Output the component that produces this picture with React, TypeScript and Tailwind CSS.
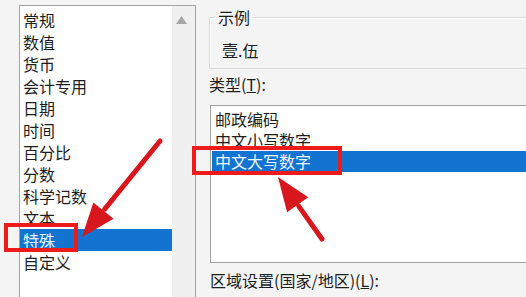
const formats = ["常规", "数值", "货币", "会计专用", "日期", "时间", "百分比", "分数", "科学记数", "文本", "特殊", "自定义"]
const types = ["邮政编码", "中文小写数字", "中文大写数字"]

function Arrow({ tail, tip }: { tail: [number, number]; tip: [number, number] }) {
  const dx = tail[0] - tip[0]
  const dy = tail[1] - tip[1]
  const len = Math.hypot(dx, dy)
  const ux = dx / len
  const uy = dy / len
  const bx = tip[0] + ux * 34
  const by = tip[1] + uy * 34
  const px = -uy * 13
  const py = ux * 13
  const head = `${tip[0]},${tip[1]} ${bx + px},${by + py} ${bx - px},${by - py}`
  return (
    <g>
      <line x1={tail[0]} y1={tail[1]} x2={bx + ux * 2} y2={by + uy * 2} stroke="#d8161d" strokeWidth={5} strokeLinecap="round" />
      <polygon points={head} fill="#d8161d" />
    </g>
  )
}

export default function App() {
  return (
    <div className="relative flex h-[297px] w-[526px] overflow-hidden bg-[#f4f4f4] font-['Noto_Sans_CJK_SC','Microsoft_YaHei',sans-serif] text-[16px] text-[#1e1e1e]">
      {/* category list */}
      <div className="w-[196px] shrink-0 pl-[19px] pt-[5px]">
        <div className="flex h-[320px] border border-[#a3a3a3] bg-white">
          <div className="flex-1 pt-[3px]">
            {formats.map((f) => (
              <div
                key={f}
                className={
                  f === "特殊"
                    ? "h-[22px] bg-[#1373d0] pl-[3px] leading-[22px] text-[#eef6ff]"
                    : "h-[22px] pl-[3px] leading-[22px]"
                }
              >
                {f}
              </div>
            ))}
          </div>
          <div className="w-[23px] bg-[#f0f0f0] pt-[9px]">
            <svg width="23" height="10" viewBox="0 0 23 10">
              <polygon points="4,9 9.5,1 15,9" fill="#a6a6a6" />
            </svg>
          </div>
        </div>
      </div>

      {/* right side */}
      <div className="flex-1 pl-[13px]">
        <fieldset className="mt-[7px] w-[340px] border border-[#d9d9d9] pt-[13px] pb-[8px] shadow-[inset_1px_1px_0_#ffffff]">
          <legend className="ml-[5px] px-[3px] leading-[20px]">示例</legend>
          <div className="pl-[12px] leading-[20px]">壹.伍</div>
        </fieldset>

        <div className="mt-[4px] leading-[22px]">
          类型(<span className="underline">T</span>):
        </div>

        <div className="mt-[10px] ml-[1px] h-[158px] w-[340px] border border-[#a3a3a3] bg-white pt-[3px]">
          {types.map((t) => (
            <div
              key={t}
              className={
                t === "中文大写数字"
                  ? "ml-[1px] h-[21px] bg-[#1373d0] pl-[3px] leading-[21px] text-[#eef6ff]"
                  : "h-[21px] pl-[4px] leading-[21px]"
              }
            >
              {t}
            </div>
          ))}
        </div>

        <div className="mt-[6px] ml-[1px] leading-[22px]">
          区域设置(国家/地区)(<span className="underline">L</span>):
        </div>
      </div>

      {/* annotations */}
      <div className="absolute left-[4px] top-[223px] h-[29px] w-[74px] border-4 border-[#ee1b1b]" />
      <div className="absolute left-[192px] top-[146px] h-[29px] w-[150px] border-4 border-[#ee1b1b]" />
      <svg className="pointer-events-none absolute inset-0" width="526" height="297" viewBox="0 0 526 297">
        <Arrow tail={[160, 141]} tip={[82, 237]} />
        <Arrow tail={[322, 239]} tip={[278, 177]} />
      </svg>
    </div>
  )
}
